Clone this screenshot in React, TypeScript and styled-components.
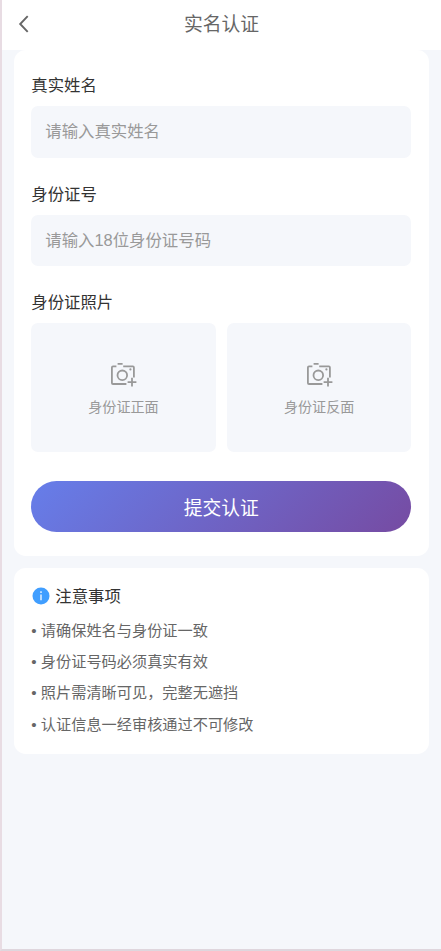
import React from 'react';
import styled, { createGlobalStyle } from 'styled-components';

const GlobalStyle = createGlobalStyle`
  * { box-sizing: border-box; }
  body {
    margin: 0;
    font-family: "Liberation Sans", "Noto Sans CJK SC", sans-serif;
    color: #333;
  }
`;

const Page = styled.div`
  height: 951px;
  overflow: hidden;
  background: #f5f7fb;
  border-left: 2px solid #e8dce3;
  border-bottom: 2px solid #dfd6dd;
`;

const NavBar = styled.header`
  display: grid;
  grid-template-columns: 44px 1fr 44px;
  align-items: center;
  height: 50px;
  background: #fff;
`;

const BackButton = styled.button`
  display: flex;
  width: 44px;
  height: 48px;
  padding: 14px 0 0 14px;
  border: 0;
  background: none;
`;

const Title = styled.h1`
  margin: 0;
  text-align: center;
  font-size: 18.8px;
  font-weight: 400;
  line-height: 28px;
  color: #666;
`;

const Card = styled.section<{ $height: number }>`
  height: ${({ $height }) => $height}px;
  margin: 0 12.3px 11.7px 11.7px;
  padding: 0 17.4px 0 17.6px;
  border-radius: 11.7px;
  background: #fff;
`;

const Field = styled.div<{ $top: number }>`
  padding-top: ${({ $top }) => $top}px;
`;

const Label = styled.label`
  display: block;
  height: 33px;
  font-size: 16.4px;
  line-height: 24px;
`;

const Input = styled.input`
  display: block;
  width: 100%;
  height: 51.4px;
  padding: 0 14px;
  border: 0;
  border-radius: 7px;
  background: #f5f7fb;
  font: 16.4px "Liberation Sans", "Noto Sans CJK SC", sans-serif;
  &::placeholder { color: #999; opacity: 1; }
`;

const Uploads = styled.div`
  display: grid;
  grid-template-columns: 1fr 1fr;
  gap: 11.3px;
`;

const Upload = styled.button`
  display: flex;
  flex-direction: column;
  align-items: center;
  height: 128.8px;
  padding: 38px 0 0;
  border: 0;
  border-radius: 7px;
  background: #f5f7fb;
  color: #999;
  font: 14.1px/20px "Liberation Sans", "Noto Sans CJK SC", sans-serif;
  svg { margin-bottom: 7px; }
`;

const Submit = styled.button`
  display: block;
  width: 100%;
  height: 51.2px;
  margin-top: 29.3px;
  padding: 0 0 1px;
  border: 0;
  border-radius: 26px;
  background: linear-gradient(135deg, #667eea 0%, #764ba2 100%);
  color: #fff;
  font: 18.8px "Liberation Sans", "Noto Sans CJK SC", sans-serif;
`;

const NoticeTitle = styled.h2`
  display: flex;
  align-items: center;
  gap: 5px;
  margin: 0;
  padding-top: 16px;
  font-size: 16.4px;
  font-weight: 400;
  line-height: 24px;
  svg { margin-left: 1px; }
`;

const Notes = styled.div`
  padding-top: 7px;
  font-size: 15.2px;
  line-height: 31.3px;
  color: #666;
`;

const CameraPlus = () => (
  <svg width="30" height="29" viewBox="0 0 30 29" fill="none" stroke="#999" strokeWidth="1.8">
    <path d="M8.4 5.3H5Q3.9 5.3 3.9 6.4V21.9Q3.9 23 5 23H18.4M15.2 5.3H24.8Q25.9 5.3 25.9 6.4V16.4" />
    <path d="M9.6 2.8H14.6M24 16.8V25.6M19.6 21.2H28.4" />
    <circle cx="14.3" cy="14.3" r="4.8" />
    <circle cx="22.4" cy="8.4" r="1.1" fill="#999" stroke="none" />
  </svg>
);

const notes = [
  '请确保姓名与身份证一致',
  '身份证号码必须真实有效',
  '照片需清晰可见，完整无遮挡',
  '认证信息一经审核通过不可修改',
];

export default function App() {
  return (
    <>
      <GlobalStyle />
      <Page>
        <NavBar>
          <BackButton aria-label="返回">
            <svg width="14" height="18" viewBox="0 0 14 18" fill="none" stroke="#666" strokeWidth="1.9">
              <path d="M11.7 1.2 4.2 9l7.5 7.8" />
            </svg>
          </BackButton>
          <Title>实名认证</Title>
        </NavBar>
        <Card $height={506}>
          <Field $top={23.3}>
            <Label htmlFor="name">真实姓名</Label>
            <Input id="name" placeholder="请输入真实姓名" />
          </Field>
          <Field $top={24}>
            <Label htmlFor="number">身份证号</Label>
            <Input id="number" placeholder="请输入18位身份证号码" />
          </Field>
          <Field $top={24}>
            <Label as="div">身份证照片</Label>
            <Uploads>
              <Upload><CameraPlus />身份证正面</Upload>
              <Upload><CameraPlus />身份证反面</Upload>
            </Uploads>
          </Field>
          <Submit>提交认证</Submit>
        </Card>
        <Card $height={186}>
          <NoticeTitle>
            <svg width="18" height="18" viewBox="0 0 18 18">
              <circle cx="9" cy="9" r="8.5" fill="#409eff" />
              <path d="M9 7.5V13.2M9 4.3V6" stroke="#e4f1ff" strokeWidth="1.5" />
            </svg>
            注意事项
          </NoticeTitle>
          <Notes>
            {notes.map((note) => <div key={note}>• {note}</div>)}
          </Notes>
        </Card>
      </Page>
    </>
  );
}
